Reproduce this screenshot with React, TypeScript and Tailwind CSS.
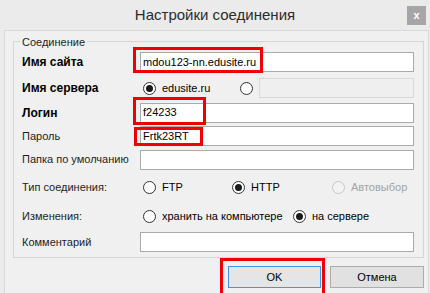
/** Connection settings dialog (Windows 8 style) */
const font = { fontFamily: '"Liberation Sans", Arial, sans-serif' };

const Radio = ({ checked, disabled }: { checked?: boolean; disabled?: boolean }) => (
  <span
    className={`flex h-[13px] w-[13px] shrink-0 items-center justify-center rounded-full border ${
      disabled ? "border-[#c6c6c6] bg-[#f3f3f3]" : "border-[#333333] bg-white"
    }`}
  >
    {checked && <span className="h-[7px] w-[7px] rounded-full bg-[#1a1a1a]" />}
  </span>
);

const Option = ({
  label,
  checked,
  disabled,
  w = "",
}: {
  label: string;
  checked?: boolean;
  disabled?: boolean;
  w?: string;
}) => (
  <div className={`flex shrink-0 items-center ${w}`}>
    <Radio checked={checked} disabled={disabled} />
    <span className={`ml-[6px] whitespace-nowrap text-[11px] ${disabled ? "text-[#a3a3a3]" : "text-black"}`}>
      {label}
    </span>
  </div>
);

const Input = ({ value, disabled, className = "" }: { value?: string; disabled?: boolean; className?: string }) => (
  <div
    className={`flex h-[20px] items-center border px-[2px] text-[11px] ${
      disabled ? "border-[#d9d9d9] bg-[#efefef]" : "border-[#ababab] bg-white"
    } ${className}`}
  >
    {value}
  </div>
);

const Row = ({ label, bold, h, children }: { label: string; bold?: boolean; h: string; children: React.ReactNode }) => (
  <div className={`flex items-center ${h}`}>
    <div
      className={`w-[126px] shrink-0 whitespace-nowrap pl-[8px] ${
        bold ? "text-[12px] font-bold text-black" : "text-[11px] text-[#1e1e1e]"
      }`}
    >
      {label}
    </div>
    <div className="flex flex-1 items-center">{children}</div>
  </div>
);

const App = () => {
  return (
    <div className="relative h-[293px] w-[430px] overflow-hidden bg-[#ebebeb] text-black" style={font}>
      {/* title bar */}
      <div className="grid h-[30px] grid-cols-[1fr_auto_1fr] items-center">
        <div />
        <div className="text-[15px] text-[#2b2b2b]">Настройки соединения</div>
        <div className="flex justify-end pr-[4px]">
          <button className="flex h-[19px] w-[19px] items-center justify-center bg-[#a6a6a6] text-[11px] font-bold leading-none text-white">
            x
          </button>
        </div>
      </div>

      {/* client area */}
      <div className="ml-[4px] h-[270px] w-[425px] border border-[#d9d9d9] bg-[#f0f0f0] pl-[8px] pt-[10px]">
        <div className="relative h-[217px] w-[411px] border border-[#d5d5d5] pt-[8px] pr-[9px]">
          <span className="absolute -top-[8px] left-[6px] bg-[#f0f0f0] px-[2px] text-[11px] text-[#1e1e1e]">
            Соединение
          </span>

          <Row label="Имя сайта" bold h="h-[24px]">
            <Input value="mdou123-nn.edusite.ru" className="flex-1" />
          </Row>
          <Row label="Имя сервера" bold h="h-[28px]">
            <div className="ml-[3px]">
              <Option label="edusite.ru" checked w="w-[97px]" />
            </div>
            <Radio />
            <Input disabled className="ml-[6px] h-[18px] flex-1" />
          </Row>
          <Row label="Логин" bold h="h-[21px]">
            <Input value="f24233" className="flex-1" />
          </Row>
          <Row label="Пароль" h="h-[26px]">
            <Input value="Frtk23RT" className="flex-1" />
          </Row>
          <Row label="Папка по умолчанию" h="h-[21px]">
            <Input className="flex-1" />
          </Row>
          <Row label="Тип соединения:" h="h-[34px]">
            <div className="ml-[3px] flex">
              <Option label="FTP" w="w-[89px]" />
              <Option label="HTTP" checked w="w-[100px]" />
              <Option label="Автовыбор" disabled />
            </div>
          </Row>
          <Row label="Изменения:" h="h-[24px]">
            <div className="ml-[3px] flex">
              <Option label="хранить на компьютере" w="w-[150px]" />
              <Option label="на сервере" checked />
            </div>
          </Row>
          <Row label="Комментарий" h="h-[28px]">
            <Input className="flex-1" />
          </Row>
        </div>

        <div className="mt-[8px] flex w-[411px] justify-end gap-[9px]">
          <button className="h-[22px] w-[93px] border border-[#3c99e6] bg-[#e5e5e5] text-[11px] font-normal">
            OK
          </button>
          <button className="h-[22px] w-[94px] border border-[#acacac] bg-[#e1e1e1] text-[11px] font-normal">
            Отмена
          </button>
        </div>
      </div>

      {/* red annotation frames */}
      <div className="absolute left-[133px] top-[47px] h-[26px] w-[130px] border-[3px] border-[#f00000]" />
      <div className="absolute left-[133px] top-[97px] h-[28px] w-[73px] border-[3px] border-[#f00000]" />
      <div className="absolute left-[134px] top-[127px] h-[19px] w-[69px] border-[3px] border-[#f00000]" />
      <div className="absolute left-[220px] top-[258px] h-[38px] w-[105px] border-[3px] border-[#f00000]" />
    </div>
  );
};

export default App;
